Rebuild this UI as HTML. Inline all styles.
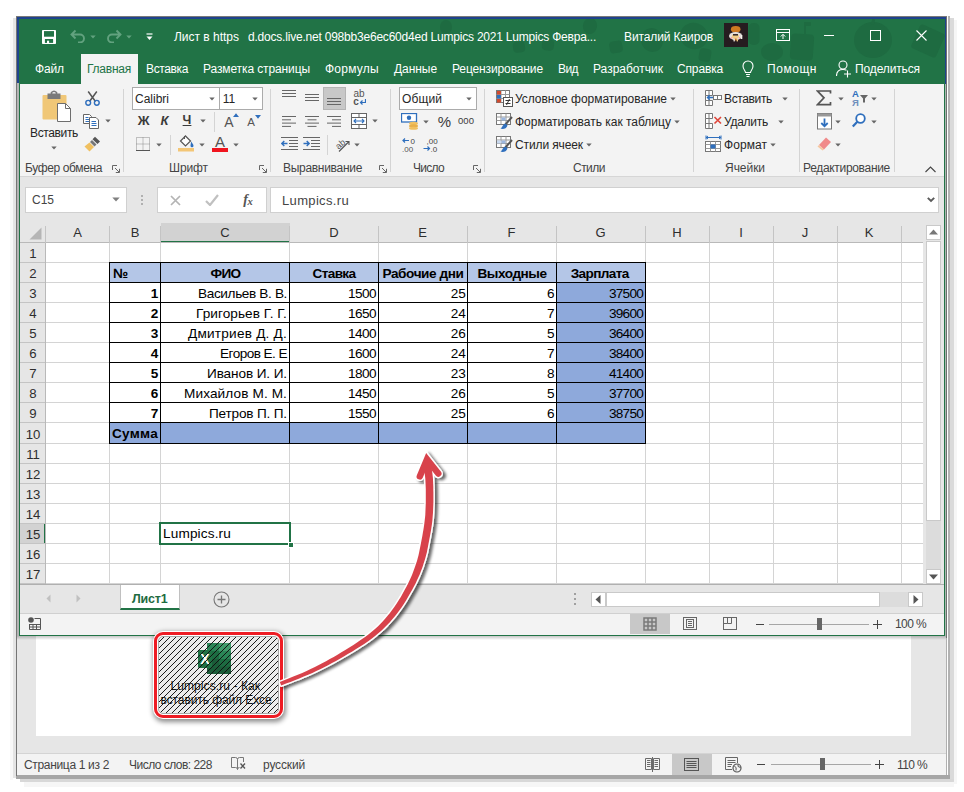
<!DOCTYPE html>
<html lang="ru">
<head>
<meta charset="utf-8">
<title>Лист в Excel</title>
<style>
html,body{margin:0;padding:0;background:#fff;}
body{width:964px;height:792px;overflow:hidden;font-family:"Liberation Sans",sans-serif;}
#root{position:relative;width:964px;height:792px;overflow:hidden;background:#fff;}
#root div,#root span.t,#root svg{position:absolute;box-sizing:border-box;}
span.t{white-space:nowrap;font-family:"Liberation Sans",sans-serif;display:inline-block;}
span.c{font-family:"Liberation Sans",sans-serif;}
</style>
</head>
<body>
<div id="root">
<div style="left:10px;top:20px;width:3px;height:760px;background:#f8f8f8;"></div>
<div style="left:13px;top:18px;width:3px;height:760px;background:#e4e4e4;"></div>
<div style="left:946px;top:638px;width:1px;height:138px;background:#b0b0b0;"></div>
<div style="left:948px;top:16px;width:2px;height:763px;background:#b2b2b2;"></div>
<div style="left:950px;top:18px;width:4px;height:764px;background:#dadada;"></div>
<div style="left:954px;top:20px;width:3px;height:764px;background:#f6f6f6;"></div>
<div style="left:16px;top:775px;width:934px;height:4px;background:#a6a6a6;"></div>
<div style="left:20px;top:779px;width:934px;height:3px;background:#d8d8d8;border-radius:0 0 4px 0;"></div>
<div style="left:24px;top:782px;width:930px;height:5px;background:#f6f6f6;"></div>
<div style="left:17px;top:636px;width:929px;height:117px;background:#e6e6e6;"></div>
<div style="left:36px;top:636px;width:875px;height:100px;background:#ffffff;"></div>
<div style="left:17px;top:753px;width:929px;height:22px;background:#f3f3f3;border-top:1px solid #d4d4d4;"></div>
<div style="left:16px;top:16px;width:1px;height:760px;background:#757575;"></div>
<div style="left:17px;top:17px;width:929px;height:619px;background:#217346;"></div>
<div style="left:17px;top:17px;width:929px;height:2px;background:#1f438c;"></div>
<div style="left:17px;top:17px;width:2px;height:66px;background:#1f438c;"></div>
<div style="left:945px;top:17px;width:1px;height:67px;background:#1f438c;"></div>
<div style="left:16px;top:16px;width:931px;height:1px;background:#7a7a7a;"></div>
<svg style="left:430px;top:19px" width="515" height="65" viewBox="0 0 515 65"><g fill="#1e6b41"><ellipse cx="16" cy="8" rx="6" ry="7" transform="rotate(0 16 8)"/><rect x="83.0" y="22.5" width="12" height="11" rx="4" transform="rotate(-8 89 28)"/><rect x="112.0" y="20.5" width="12" height="11" rx="4" transform="rotate(6 118 26)"/><ellipse cx="160" cy="7" rx="7" ry="8" transform="rotate(10 160 7)"/><rect x="179.5" y="22.0" width="13" height="12" rx="4" transform="rotate(-10 186 28)"/><ellipse cx="222" cy="21" rx="11" ry="12" transform="rotate(-15 222 21)"/><ellipse cx="264" cy="17" rx="14" ry="13" transform="rotate(20 264 17)"/><rect x="269.0" y="29.5" width="12" height="13" rx="4" transform="rotate(10 275 36)"/><rect x="318.5" y="4.0" width="11" height="22" rx="5" transform="rotate(0 324 15)"/><ellipse cx="342" cy="33" rx="11" ry="9" transform="rotate(0 342 33)"/><rect x="360.5" y="15.0" width="23" height="26" rx="4" transform="rotate(4 372 28)"/><rect x="374.0" y="3.0" width="2" height="12" rx="0" transform="rotate(0 375 9)"/><rect x="375.0" y="3.0" width="6" height="4" rx="1" transform="rotate(0 378 5)"/><ellipse cx="443" cy="21" rx="19" ry="18" transform="rotate(0 443 21)"/><rect x="441.5" y="0.0" width="3" height="6" rx="1" transform="rotate(15 443 3)"/><rect x="484.5" y="9.0" width="27" height="26" rx="3" transform="rotate(24 498 22)"/></g></svg>
<div style="left:81px;top:54px;width:57px;height:30px;background:#f3f3f3;"></div>
<div style="left:20px;top:84px;width:924px;height:93px;background:#f3f3f3;"></div>
<div style="left:20px;top:176px;width:924px;height:1px;background:#d6d6d6;"></div>
<div style="left:20px;top:177px;width:924px;height:408px;background:#e6e6e6;"></div>
<div style="left:25px;top:187px;width:102px;height:26px;background:#ffffff;border:1px solid #d0d0d0;"></div>
<div style="left:157px;top:187px;width:110px;height:26px;background:#ffffff;border:1px solid #d0d0d0;"></div>
<div style="left:270px;top:187px;width:669px;height:26px;background:#ffffff;border:1px solid #d0d0d0;"></div>
<div style="left:46px;top:243px;width:877px;height:342px;background:#ffffff;"></div>
<div style="left:20px;top:243px;width:26px;height:342px;background:#e6e6e6;"></div>
<div style="left:161px;top:223px;width:129px;height:20px;background:#d2d2d2;border-bottom:2px solid #217346;"></div>
<div style="left:20px;top:524px;width:26px;height:19px;background:#d2d2d2;border-right:2px solid #217346;"></div>
<div style="left:109px;top:243px;width:1px;height:342px;background:#d4d4d4;"></div>
<div style="left:160px;top:243px;width:1px;height:342px;background:#d4d4d4;"></div>
<div style="left:289px;top:243px;width:1px;height:342px;background:#d4d4d4;"></div>
<div style="left:378px;top:243px;width:1px;height:342px;background:#d4d4d4;"></div>
<div style="left:467px;top:243px;width:1px;height:342px;background:#d4d4d4;"></div>
<div style="left:556px;top:243px;width:1px;height:342px;background:#d4d4d4;"></div>
<div style="left:645px;top:243px;width:1px;height:342px;background:#d4d4d4;"></div>
<div style="left:709px;top:243px;width:1px;height:342px;background:#d4d4d4;"></div>
<div style="left:773px;top:243px;width:1px;height:342px;background:#d4d4d4;"></div>
<div style="left:837px;top:243px;width:1px;height:342px;background:#d4d4d4;"></div>
<div style="left:901px;top:243px;width:1px;height:342px;background:#d4d4d4;"></div>
<div style="left:46px;top:262px;width:877px;height:1px;background:#d4d4d4;"></div>
<div style="left:46px;top:282px;width:877px;height:1px;background:#d4d4d4;"></div>
<div style="left:46px;top:302px;width:877px;height:1px;background:#d4d4d4;"></div>
<div style="left:46px;top:322px;width:877px;height:1px;background:#d4d4d4;"></div>
<div style="left:46px;top:342px;width:877px;height:1px;background:#d4d4d4;"></div>
<div style="left:46px;top:362px;width:877px;height:1px;background:#d4d4d4;"></div>
<div style="left:46px;top:382px;width:877px;height:1px;background:#d4d4d4;"></div>
<div style="left:46px;top:402px;width:877px;height:1px;background:#d4d4d4;"></div>
<div style="left:46px;top:422px;width:877px;height:1px;background:#d4d4d4;"></div>
<div style="left:46px;top:443px;width:877px;height:1px;background:#d4d4d4;"></div>
<div style="left:46px;top:463px;width:877px;height:1px;background:#d4d4d4;"></div>
<div style="left:46px;top:483px;width:877px;height:1px;background:#d4d4d4;"></div>
<div style="left:46px;top:503px;width:877px;height:1px;background:#d4d4d4;"></div>
<div style="left:46px;top:523px;width:877px;height:1px;background:#d4d4d4;"></div>
<div style="left:46px;top:543px;width:877px;height:1px;background:#d4d4d4;"></div>
<div style="left:46px;top:563px;width:877px;height:1px;background:#d4d4d4;"></div>
<div style="left:46px;top:583px;width:877px;height:1px;background:#d4d4d4;"></div>
<div style="left:20px;top:242px;width:903px;height:1px;background:#b9b9b9;"></div>
<div style="left:45px;top:243px;width:1px;height:342px;background:#b9b9b9;"></div>
<div style="left:45px;top:226px;width:1px;height:17px;background:#c4c4c4;"></div>
<div style="left:109px;top:226px;width:1px;height:17px;background:#c4c4c4;"></div>
<div style="left:160px;top:226px;width:1px;height:17px;background:#c4c4c4;"></div>
<div style="left:289px;top:226px;width:1px;height:17px;background:#c4c4c4;"></div>
<div style="left:378px;top:226px;width:1px;height:17px;background:#c4c4c4;"></div>
<div style="left:467px;top:226px;width:1px;height:17px;background:#c4c4c4;"></div>
<div style="left:556px;top:226px;width:1px;height:17px;background:#c4c4c4;"></div>
<div style="left:645px;top:226px;width:1px;height:17px;background:#c4c4c4;"></div>
<div style="left:709px;top:226px;width:1px;height:17px;background:#c4c4c4;"></div>
<div style="left:773px;top:226px;width:1px;height:17px;background:#c4c4c4;"></div>
<div style="left:837px;top:226px;width:1px;height:17px;background:#c4c4c4;"></div>
<div style="left:901px;top:226px;width:1px;height:17px;background:#c4c4c4;"></div>
<div style="left:20px;top:262px;width:25px;height:1px;background:#c4c4c4;"></div>
<div style="left:20px;top:282px;width:25px;height:1px;background:#c4c4c4;"></div>
<div style="left:20px;top:302px;width:25px;height:1px;background:#c4c4c4;"></div>
<div style="left:20px;top:322px;width:25px;height:1px;background:#c4c4c4;"></div>
<div style="left:20px;top:342px;width:25px;height:1px;background:#c4c4c4;"></div>
<div style="left:20px;top:362px;width:25px;height:1px;background:#c4c4c4;"></div>
<div style="left:20px;top:382px;width:25px;height:1px;background:#c4c4c4;"></div>
<div style="left:20px;top:402px;width:25px;height:1px;background:#c4c4c4;"></div>
<div style="left:20px;top:422px;width:25px;height:1px;background:#c4c4c4;"></div>
<div style="left:20px;top:443px;width:25px;height:1px;background:#c4c4c4;"></div>
<div style="left:20px;top:463px;width:25px;height:1px;background:#c4c4c4;"></div>
<div style="left:20px;top:483px;width:25px;height:1px;background:#c4c4c4;"></div>
<div style="left:20px;top:503px;width:25px;height:1px;background:#c4c4c4;"></div>
<div style="left:20px;top:523px;width:25px;height:1px;background:#c4c4c4;"></div>
<div style="left:20px;top:543px;width:25px;height:1px;background:#c4c4c4;"></div>
<div style="left:20px;top:563px;width:25px;height:1px;background:#c4c4c4;"></div>
<div style="left:20px;top:583px;width:25px;height:1px;background:#c4c4c4;"></div>
<svg style="left:29px;top:227px" width="13" height="13"><path d="M12.5 0.5V12.5H0.5Z" fill="#b5b5b5"/></svg>
<div style="left:110px;top:263px;width:536px;height:19px;background:#b4c6e7;"></div>
<div style="left:557px;top:283px;width:89px;height:139px;background:#8ea9db;"></div>
<div style="left:110px;top:423px;width:536px;height:20px;background:#8ea9db;"></div>
<div style="left:109px;top:262px;width:1px;height:182px;background:#000000;"></div>
<div style="left:160px;top:262px;width:1px;height:182px;background:#000000;"></div>
<div style="left:289px;top:262px;width:1px;height:182px;background:#000000;"></div>
<div style="left:378px;top:262px;width:1px;height:182px;background:#000000;"></div>
<div style="left:467px;top:262px;width:1px;height:182px;background:#000000;"></div>
<div style="left:556px;top:262px;width:1px;height:182px;background:#000000;"></div>
<div style="left:645px;top:262px;width:1px;height:182px;background:#000000;"></div>
<div style="left:109px;top:262px;width:537px;height:1px;background:#000000;"></div>
<div style="left:109px;top:282px;width:537px;height:1px;background:#000000;"></div>
<div style="left:109px;top:302px;width:537px;height:1px;background:#000000;"></div>
<div style="left:109px;top:322px;width:537px;height:1px;background:#000000;"></div>
<div style="left:109px;top:342px;width:537px;height:1px;background:#000000;"></div>
<div style="left:109px;top:362px;width:537px;height:1px;background:#000000;"></div>
<div style="left:109px;top:382px;width:537px;height:1px;background:#000000;"></div>
<div style="left:109px;top:402px;width:537px;height:1px;background:#000000;"></div>
<div style="left:109px;top:422px;width:537px;height:1px;background:#000000;"></div>
<div style="left:109px;top:443px;width:537px;height:1px;background:#000000;"></div>
<div style="left:159px;top:522px;width:132px;height:23px;border:2px solid #217346;"></div>
<div style="left:288px;top:542px;width:6px;height:6px;background:#217346;border:1px solid #fff;"></div>
<div style="left:926px;top:225px;width:15px;height:15px;background:#ffffff;border:1px solid #c9c9c9;"></div>
<div style="left:926px;top:521px;width:15px;height:48px;background:#dcdcdc;"></div>
<div style="left:926px;top:241px;width:15px;height:280px;background:#ffffff;border:1px solid #c9c9c9;"></div>
<div style="left:926px;top:569px;width:15px;height:15px;background:#ffffff;border:1px solid #c9c9c9;"></div>
<svg style="left:929px;top:229px" width="9" height="6"><path d="M0 5.5L4.5 0.5L9 5.5Z" fill="#777"/></svg>
<svg style="left:929px;top:574px" width="9" height="6"><path d="M0 0.5L4.5 5.5L9 0.5Z" fill="#555"/></svg>
<div style="left:20px;top:585px;width:924px;height:28px;background:#e6e6e6;"></div>
<div style="left:20px;top:584px;width:924px;height:1px;background:#b0b0b0;"></div>
<div style="left:120px;top:585px;width:60px;height:25px;background:#ffffff;border-bottom:2px solid #217346;border-left:1px solid #c0c0c0;border-right:1px solid #c0c0c0;"></div>
<div style="left:591px;top:592px;width:15px;height:15px;background:#ffffff;border:1px solid #c9c9c9;"></div>
<div style="left:880px;top:592px;width:28px;height:15px;background:#dcdcdc;"></div>
<div style="left:606px;top:592px;width:274px;height:15px;background:#ffffff;border:1px solid #c9c9c9;"></div>
<div style="left:908px;top:592px;width:15px;height:15px;background:#ffffff;border:1px solid #c9c9c9;"></div>
<svg style="left:595px;top:595px" width="6" height="9"><path d="M5.5 0L0.5 4.5L5.5 9Z" fill="#555"/></svg>
<svg style="left:913px;top:595px" width="6" height="9"><path d="M0.5 0L5.5 4.5L0.5 9Z" fill="#555"/></svg>
<div style="left:574px;top:593px;width:2px;height:2px;background:#a0a0a0;"></div>
<div style="left:574px;top:598px;width:2px;height:2px;background:#a0a0a0;"></div>
<div style="left:574px;top:603px;width:2px;height:2px;background:#a0a0a0;"></div>
<div style="left:20px;top:613px;width:924px;height:22px;background:#f3f3f3;border-top:1px solid #d0d0d0;"></div>
<div style="left:630px;top:614px;width:40px;height:21px;background:#c8c8c8;"></div>
<div style="left:20px;top:634px;width:924px;height:1px;background:#f3f3f3;"></div>
<div style="left:19px;top:635px;width:926px;height:1px;background:#217346;"></div>
<div style="left:17px;top:83px;width:2px;height:553px;background:#b4b4b4;"></div>
<div style="left:19px;top:84px;width:1px;height:552px;background:#217346;"></div>
<div style="left:944px;top:84px;width:1px;height:552px;background:#217346;"></div>
<div style="left:945px;top:84px;width:1px;height:552px;background:#a9b8af;"></div>
<div style="left:946px;top:17px;width:1px;height:621px;background:#707070;"></div>
<div style="left:17px;top:636px;width:929px;height:4px;background:linear-gradient(rgba(0,0,0,.22),rgba(0,0,0,0));"></div>
<div style="left:132px;top:87px;width:88px;height:23px;background:#ffffff;border:1px solid #ababab;"></div>
<div style="left:220px;top:87px;width:43px;height:23px;background:#ffffff;border:1px solid #ababab;border-left:none;"></div>
<div style="left:399px;top:87px;width:78px;height:23px;background:#ffffff;border:1px solid #ababab;"></div>
<div style="left:323px;top:87px;width:23px;height:23px;background:#c8c8c8;border:1px solid #b4b4b4;"></div>
<div style="left:672px;top:754px;width:40px;height:21px;background:#c8c8c8;"></div>
<span class="t m" style="left:174px;top:29.8px;font-size:12px;line-height:14.4px;color:#ffffff;letter-spacing:-0.01px;">Лист в https</span>
<span class="t m" style="left:248px;top:29.8px;font-size:12px;line-height:14.4px;color:#ffffff;letter-spacing:-0.21px;">d.docs.live.net 098bb3e6ec60d4ed Lumpics 2021 Lumpics Февра...</span>
<span class="t m" style="left:624px;top:29.8px;font-size:12px;line-height:14.4px;color:#ffffff;letter-spacing:-0.11px;">Виталий Каиров</span>
<span class="t m" style="left:35px;top:61.8px;font-size:12px;line-height:14.4px;color:#ffffff;letter-spacing:-0.13px;">Файл</span>
<span class="t m" style="left:87px;top:61.8px;font-size:12px;line-height:14.4px;color:#217346;letter-spacing:-0.24px;">Главная</span>
<span class="t m" style="left:146px;top:61.8px;font-size:12px;line-height:14.4px;color:#ffffff;letter-spacing:-0.37px;">Вставка</span>
<span class="t m" style="left:203px;top:61.8px;font-size:12px;line-height:14.4px;color:#ffffff;letter-spacing:-0.11px;">Разметка страницы</span>
<span class="t m" style="left:325px;top:61.8px;font-size:12px;line-height:14.4px;color:#ffffff;letter-spacing:0.25px;">Формулы</span>
<span class="t m" style="left:394px;top:61.8px;font-size:12px;line-height:14.4px;color:#ffffff;letter-spacing:-0.06px;">Данные</span>
<span class="t m" style="left:452px;top:61.8px;font-size:12px;line-height:14.4px;color:#ffffff;letter-spacing:-0.12px;">Рецензирование</span>
<span class="t m" style="left:558px;top:61.8px;font-size:12px;line-height:14.4px;color:#ffffff;letter-spacing:-0.57px;">Вид</span>
<span class="t m" style="left:593px;top:61.8px;font-size:12px;line-height:14.4px;color:#ffffff;">Разработчик</span>
<span class="t m" style="left:677px;top:61.8px;font-size:12px;line-height:14.4px;color:#ffffff;letter-spacing:-0.15px;">Справка</span>
<span class="t m" style="left:767px;top:61.8px;font-size:12px;line-height:14.4px;color:#ffffff;letter-spacing:0.54px;">Помощн</span>
<span class="t m" style="left:855px;top:61.8px;font-size:12px;line-height:14.4px;color:#ffffff;letter-spacing:-0.13px;">Поделиться</span>
<span class="t m" style="left:30px;top:125.8px;font-size:12px;line-height:14.4px;color:#262626;letter-spacing:-0.36px;">Вставить</span>
<span class="t m" style="left:25px;top:161.3px;font-size:12px;line-height:14.4px;color:#444444;letter-spacing:-0.38px;">Буфер обмена</span>
<span class="t m" style="left:135px;top:91.8px;font-size:12px;line-height:14.4px;color:#262626;">Calibri</span>
<span class="t m" style="left:229.0px;transform:translateX(-50%);top:91.8px;font-size:12px;line-height:14.4px;color:#262626;">11</span>
<span class="t m" style="left:143.5px;transform:translateX(-50%);top:113.2px;font-size:13px;line-height:15.6px;color:#3b3b3b;font-weight:700;">Ж</span>
<span class="t m" style="left:164.5px;transform:translateX(-50%);top:113.2px;font-size:13px;line-height:15.6px;color:#3b3b3b;font-weight:700;font-style:italic;">К</span>
<span class="t m" style="left:187.0px;transform:translateX(-50%);top:113.0px;font-size:12.5px;line-height:15.0px;color:#3b3b3b;font-weight:700;text-decoration:underline;">Ч</span>
<span class="t m" style="left:169px;top:161.3px;font-size:12px;line-height:14.4px;color:#444444;letter-spacing:-0.10px;">Шрифт</span>
<span class="t m" style="left:283px;top:161.3px;font-size:12px;line-height:14.4px;color:#444444;letter-spacing:-0.30px;">Выравнивание</span>
<span class="t m" style="left:402px;top:91.8px;font-size:12px;line-height:14.4px;color:#262626;letter-spacing:0.10px;">Общий</span>
<span class="t m" style="left:444.5px;transform:translateX(-50%);top:112.5px;font-size:15px;line-height:18.0px;color:#3b3b3b;">%</span>
<span class="t m" style="left:458px;top:115.3px;font-size:9.5px;line-height:11.4px;color:#3b3b3b;letter-spacing:0.05px;">000</span>
<span class="t m" style="left:413px;top:161.3px;font-size:12px;line-height:14.4px;color:#444444;letter-spacing:-0.70px;">Число</span>
<span class="t m" style="left:515px;top:91.8px;font-size:12px;line-height:14.4px;color:#262626;letter-spacing:-0.03px;">Условное форматирование</span>
<span class="t m" style="left:515px;top:114.8px;font-size:12px;line-height:14.4px;color:#262626;letter-spacing:-0.01px;">Форматировать как таблицу</span>
<span class="t m" style="left:515px;top:137.8px;font-size:12px;line-height:14.4px;color:#262626;letter-spacing:-0.12px;">Стили ячеек</span>
<span class="t m" style="left:573px;top:161.3px;font-size:12px;line-height:14.4px;color:#444444;letter-spacing:-0.52px;">Стили</span>
<span class="t m" style="left:724px;top:91.8px;font-size:12px;line-height:14.4px;color:#262626;letter-spacing:-0.36px;">Вставить</span>
<span class="t m" style="left:724px;top:114.8px;font-size:12px;line-height:14.4px;color:#262626;letter-spacing:-0.26px;">Удалить</span>
<span class="t m" style="left:724px;top:137.8px;font-size:12px;line-height:14.4px;color:#262626;letter-spacing:0.06px;">Формат</span>
<span class="t m" style="left:725px;top:161.3px;font-size:12px;line-height:14.4px;color:#444444;letter-spacing:-0.04px;">Ячейки</span>
<span class="t m" style="left:803px;top:161.3px;font-size:12px;line-height:14.4px;color:#444444;letter-spacing:-0.32px;">Редактирование</span>
<span class="t m" style="left:32px;top:193.3px;font-size:12px;line-height:14.4px;color:#444444;letter-spacing:-0.01px;">C15</span>
<span class="t m" style="left:282px;top:192.7px;font-size:13px;line-height:15.6px;color:#444444;letter-spacing:0.34px;">Lumpics.ru</span>
<span class="t m" style="left:77.5px;transform:translateX(-50%);top:225.2px;font-size:13px;line-height:15.6px;color:#2e2e2e;">A</span>
<span class="t m" style="left:135.0px;transform:translateX(-50%);top:225.2px;font-size:13px;line-height:15.6px;color:#2e2e2e;">B</span>
<span class="t m" style="left:225.0px;transform:translateX(-50%);top:225.2px;font-size:13px;line-height:15.6px;color:#2e2e2e;">C</span>
<span class="t m" style="left:334.0px;transform:translateX(-50%);top:225.2px;font-size:13px;line-height:15.6px;color:#2e2e2e;">D</span>
<span class="t m" style="left:422.5px;transform:translateX(-50%);top:225.2px;font-size:13px;line-height:15.6px;color:#2e2e2e;">E</span>
<span class="t m" style="left:511.5px;transform:translateX(-50%);top:225.2px;font-size:13px;line-height:15.6px;color:#2e2e2e;">F</span>
<span class="t m" style="left:600.5px;transform:translateX(-50%);top:225.2px;font-size:13px;line-height:15.6px;color:#2e2e2e;">G</span>
<span class="t m" style="left:677.0px;transform:translateX(-50%);top:225.2px;font-size:13px;line-height:15.6px;color:#2e2e2e;">H</span>
<span class="t m" style="left:741.0px;transform:translateX(-50%);top:225.2px;font-size:13px;line-height:15.6px;color:#2e2e2e;">I</span>
<span class="t m" style="left:805.0px;transform:translateX(-50%);top:225.2px;font-size:13px;line-height:15.6px;color:#2e2e2e;">J</span>
<span class="t m" style="left:869.0px;transform:translateX(-50%);top:225.2px;font-size:13px;line-height:15.6px;color:#2e2e2e;">K</span>
<span class="t m" style="left:33.0px;transform:translateX(-50%);top:246.4px;font-size:13.2px;line-height:15.8px;color:#2e2e2e;">1</span>
<span class="t m" style="left:33.0px;transform:translateX(-50%);top:266.4px;font-size:13.2px;line-height:15.8px;color:#2e2e2e;">2</span>
<span class="t m" style="left:33.0px;transform:translateX(-50%);top:286.4px;font-size:13.2px;line-height:15.8px;color:#2e2e2e;">3</span>
<span class="t m" style="left:33.0px;transform:translateX(-50%);top:306.4px;font-size:13.2px;line-height:15.8px;color:#2e2e2e;">4</span>
<span class="t m" style="left:33.0px;transform:translateX(-50%);top:326.4px;font-size:13.2px;line-height:15.8px;color:#2e2e2e;">5</span>
<span class="t m" style="left:33.0px;transform:translateX(-50%);top:346.4px;font-size:13.2px;line-height:15.8px;color:#2e2e2e;">6</span>
<span class="t m" style="left:33.0px;transform:translateX(-50%);top:366.4px;font-size:13.2px;line-height:15.8px;color:#2e2e2e;">7</span>
<span class="t m" style="left:33.0px;transform:translateX(-50%);top:386.4px;font-size:13.2px;line-height:15.8px;color:#2e2e2e;">8</span>
<span class="t m" style="left:33.0px;transform:translateX(-50%);top:406.4px;font-size:13.2px;line-height:15.8px;color:#2e2e2e;">9</span>
<span class="t m" style="left:33.0px;transform:translateX(-50%);top:426.9px;font-size:13.2px;line-height:15.8px;color:#2e2e2e;">10</span>
<span class="t m" style="left:33.0px;transform:translateX(-50%);top:447.4px;font-size:13.2px;line-height:15.8px;color:#2e2e2e;">11</span>
<span class="t m" style="left:33.0px;transform:translateX(-50%);top:467.4px;font-size:13.2px;line-height:15.8px;color:#2e2e2e;">12</span>
<span class="t m" style="left:33.0px;transform:translateX(-50%);top:487.4px;font-size:13.2px;line-height:15.8px;color:#2e2e2e;">13</span>
<span class="t m" style="left:33.0px;transform:translateX(-50%);top:507.4px;font-size:13.2px;line-height:15.8px;color:#2e2e2e;">14</span>
<span class="t m" style="left:33.0px;transform:translateX(-50%);top:527.4px;font-size:13.2px;line-height:15.8px;color:#2e2e2e;">15</span>
<span class="t m" style="left:33.0px;transform:translateX(-50%);top:547.4px;font-size:13.2px;line-height:15.8px;color:#2e2e2e;">16</span>
<span class="t m" style="left:33.0px;transform:translateX(-50%);top:567.4px;font-size:13.2px;line-height:15.8px;color:#2e2e2e;">17</span>
<span class="t m" style="left:113px;top:265.8px;font-size:13.6px;line-height:16.3px;color:#000000;font-weight:700;">№</span>
<span class="t m" style="left:210.5px;top:265.8px;font-size:13.6px;line-height:16.3px;color:#000000;font-weight:700;letter-spacing:-0.65px;">ФИО</span>
<span class="t m" style="left:312.5px;top:265.8px;font-size:13.6px;line-height:16.3px;color:#000000;font-weight:700;letter-spacing:-0.63px;">Ставка</span>
<span class="t m" style="left:382.5px;top:265.8px;font-size:13.6px;line-height:16.3px;color:#000000;font-weight:700;letter-spacing:-0.42px;">Рабочие дни</span>
<span class="t m" style="left:477.5px;top:265.8px;font-size:13.6px;line-height:16.3px;color:#000000;font-weight:700;letter-spacing:-0.47px;">Выходные</span>
<span class="t m" style="left:570.7px;top:265.8px;font-size:13.6px;line-height:16.3px;color:#000000;font-weight:700;letter-spacing:-0.63px;">Зарплата</span>
<span class="t m" style="left:154.5px;transform:translateX(-50%);top:285.8px;font-size:13.6px;line-height:16.3px;color:#000000;font-weight:700;">1</span>
<span class="t m" style="left:198px;top:285.8px;font-size:13.6px;line-height:16.3px;color:#000000;letter-spacing:-0.36px;">Васильев В. В.</span>
<span class="t m" style="left:348px;top:285.8px;font-size:13.6px;line-height:16.3px;color:#000000;letter-spacing:-0.56px;">1500</span>
<span class="t m" style="left:458.2px;transform:translateX(-50%);top:285.8px;font-size:13.6px;line-height:16.3px;color:#000000;">25</span>
<span class="t m" style="left:550.8px;transform:translateX(-50%);top:285.8px;font-size:13.6px;line-height:16.3px;color:#000000;">6</span>
<span class="t m" style="left:609px;top:285.8px;font-size:13.6px;line-height:16.3px;color:#000000;letter-spacing:-0.76px;">37500</span>
<span class="t m" style="left:154.5px;transform:translateX(-50%);top:305.8px;font-size:13.6px;line-height:16.3px;color:#000000;font-weight:700;">2</span>
<span class="t m" style="left:196px;top:305.8px;font-size:13.6px;line-height:16.3px;color:#000000;letter-spacing:0.07px;">Григорьев Г. Г.</span>
<span class="t m" style="left:348px;top:305.8px;font-size:13.6px;line-height:16.3px;color:#000000;letter-spacing:-0.56px;">1650</span>
<span class="t m" style="left:458.2px;transform:translateX(-50%);top:305.8px;font-size:13.6px;line-height:16.3px;color:#000000;">24</span>
<span class="t m" style="left:550.8px;transform:translateX(-50%);top:305.8px;font-size:13.6px;line-height:16.3px;color:#000000;">7</span>
<span class="t m" style="left:609px;top:305.8px;font-size:13.6px;line-height:16.3px;color:#000000;letter-spacing:-0.76px;">39600</span>
<span class="t m" style="left:154.5px;transform:translateX(-50%);top:325.8px;font-size:13.6px;line-height:16.3px;color:#000000;font-weight:700;">3</span>
<span class="t m" style="left:188px;top:325.8px;font-size:13.6px;line-height:16.3px;color:#000000;letter-spacing:0.23px;">Дмитриев Д. Д.</span>
<span class="t m" style="left:348px;top:325.8px;font-size:13.6px;line-height:16.3px;color:#000000;letter-spacing:-0.56px;">1400</span>
<span class="t m" style="left:458.2px;transform:translateX(-50%);top:325.8px;font-size:13.6px;line-height:16.3px;color:#000000;">26</span>
<span class="t m" style="left:550.8px;transform:translateX(-50%);top:325.8px;font-size:13.6px;line-height:16.3px;color:#000000;">5</span>
<span class="t m" style="left:609px;top:325.8px;font-size:13.6px;line-height:16.3px;color:#000000;letter-spacing:-0.76px;">36400</span>
<span class="t m" style="left:154.5px;transform:translateX(-50%);top:345.8px;font-size:13.6px;line-height:16.3px;color:#000000;font-weight:700;">4</span>
<span class="t m" style="left:220px;top:345.8px;font-size:13.6px;line-height:16.3px;color:#000000;letter-spacing:-0.55px;">Егоров Е. Е</span>
<span class="t m" style="left:348px;top:345.8px;font-size:13.6px;line-height:16.3px;color:#000000;letter-spacing:-0.56px;">1600</span>
<span class="t m" style="left:458.2px;transform:translateX(-50%);top:345.8px;font-size:13.6px;line-height:16.3px;color:#000000;">24</span>
<span class="t m" style="left:550.8px;transform:translateX(-50%);top:345.8px;font-size:13.6px;line-height:16.3px;color:#000000;">7</span>
<span class="t m" style="left:609px;top:345.8px;font-size:13.6px;line-height:16.3px;color:#000000;letter-spacing:-0.76px;">38400</span>
<span class="t m" style="left:154.5px;transform:translateX(-50%);top:365.8px;font-size:13.6px;line-height:16.3px;color:#000000;font-weight:700;">5</span>
<span class="t m" style="left:207px;top:365.8px;font-size:13.6px;line-height:16.3px;color:#000000;letter-spacing:-0.11px;">Иванов И. И.</span>
<span class="t m" style="left:348px;top:365.8px;font-size:13.6px;line-height:16.3px;color:#000000;letter-spacing:-0.56px;">1800</span>
<span class="t m" style="left:458.2px;transform:translateX(-50%);top:365.8px;font-size:13.6px;line-height:16.3px;color:#000000;">23</span>
<span class="t m" style="left:550.8px;transform:translateX(-50%);top:365.8px;font-size:13.6px;line-height:16.3px;color:#000000;">8</span>
<span class="t m" style="left:609px;top:365.8px;font-size:13.6px;line-height:16.3px;color:#000000;letter-spacing:-0.76px;">41400</span>
<span class="t m" style="left:154.5px;transform:translateX(-50%);top:385.8px;font-size:13.6px;line-height:16.3px;color:#000000;font-weight:700;">6</span>
<span class="t m" style="left:184px;top:385.8px;font-size:13.6px;line-height:16.3px;color:#000000;letter-spacing:0.12px;">Михайлов М. М.</span>
<span class="t m" style="left:348px;top:385.8px;font-size:13.6px;line-height:16.3px;color:#000000;letter-spacing:-0.56px;">1450</span>
<span class="t m" style="left:458.2px;transform:translateX(-50%);top:385.8px;font-size:13.6px;line-height:16.3px;color:#000000;">26</span>
<span class="t m" style="left:550.8px;transform:translateX(-50%);top:385.8px;font-size:13.6px;line-height:16.3px;color:#000000;">5</span>
<span class="t m" style="left:609px;top:385.8px;font-size:13.6px;line-height:16.3px;color:#000000;letter-spacing:-0.76px;">37700</span>
<span class="t m" style="left:154.5px;transform:translateX(-50%);top:405.8px;font-size:13.6px;line-height:16.3px;color:#000000;font-weight:700;">7</span>
<span class="t m" style="left:209px;top:405.8px;font-size:13.6px;line-height:16.3px;color:#000000;letter-spacing:-0.18px;">Петров П. П.</span>
<span class="t m" style="left:348px;top:405.8px;font-size:13.6px;line-height:16.3px;color:#000000;letter-spacing:-0.56px;">1550</span>
<span class="t m" style="left:458.2px;transform:translateX(-50%);top:405.8px;font-size:13.6px;line-height:16.3px;color:#000000;">25</span>
<span class="t m" style="left:550.8px;transform:translateX(-50%);top:405.8px;font-size:13.6px;line-height:16.3px;color:#000000;">6</span>
<span class="t m" style="left:609px;top:405.8px;font-size:13.6px;line-height:16.3px;color:#000000;letter-spacing:-0.76px;">38750</span>
<span class="t m" style="left:112px;top:425.8px;font-size:13.6px;line-height:16.3px;color:#000000;font-weight:700;letter-spacing:0.26px;">Сумма</span>
<span class="t m" style="left:163px;top:525.8px;font-size:13.6px;line-height:16.3px;color:#000000;letter-spacing:0.15px;">Lumpics.ru</span>
<span class="t m" style="left:132px;top:591.5px;font-size:12.5px;line-height:15.0px;color:#1e6b41;font-weight:700;letter-spacing:-0.20px;">Лист1</span>
<span class="t m" style="left:895px;top:616.8px;font-size:12px;line-height:14.4px;color:#444444;letter-spacing:-0.61px;">100 %</span>
<span class="t m" style="left:24px;top:758.0px;font-size:12px;line-height:14.4px;color:#444444;letter-spacing:-0.33px;">Страница 1 из 2</span>
<span class="t m" style="left:129px;top:758.0px;font-size:12px;line-height:14.4px;color:#444444;letter-spacing:-0.52px;">Число слов: 228</span>
<span class="t m" style="left:263px;top:758.0px;font-size:12px;line-height:14.4px;color:#444444;letter-spacing:-0.15px;">русский</span>
<span class="t m" style="left:897px;top:758.0px;font-size:12px;line-height:14.4px;color:#444444;letter-spacing:-0.63px;">110 %</span>
<svg style="left:42px;top:30px;" width="14" height="14" viewBox="0 0 14 14"><rect x="0" y="0" width="14" height="14" rx="0.800" fill="#fff"/><rect x="2" y="1.100" width="10" height="5.600" fill="#217346"/><rect x="2.900" y="9" width="8.200" height="3.900" fill="#217346"/><rect x="5" y="10.700" width="2.100" height="2.300" fill="#fff"/></svg>
<svg style="left:70px;top:29px;" width="16" height="14" viewBox="0 0 16 14"><path d="M1.5 5.5H10A4 4 0 0 1 10 13.5H8M5.5 1.5L1.5 5.5L5.5 9.5" fill="none" stroke="#62a27f" stroke-width="1.9"/></svg>
<svg style="left:90px;top:35px;" width="6" height="4" viewBox="0 0 6 4"><path d="M0.3 0.5H5.7L3 3.5Z" fill="#62a27f"/></svg>
<svg style="left:106px;top:29px;" width="16" height="14" viewBox="0 0 16 14"><path d="M14.5 5.5H6A4 4 0 0 0 6 13.5H8M10.5 1.5L14.5 5.5L10.5 9.5" fill="none" stroke="#62a27f" stroke-width="1.9"/></svg>
<svg style="left:126px;top:35px;" width="6" height="4" viewBox="0 0 6 4"><path d="M0.3 0.5H5.7L3 3.5Z" fill="#62a27f"/></svg>
<svg style="left:146px;top:33px;" width="7" height="8" viewBox="0 0 7 8"><path d="M0.5 1H6.5" stroke="#fff" stroke-width="1.2"/><path d="M0.5 3.5H6.5L3.5 7Z" fill="#fff"/></svg>
<div style="left:724px;top:23px;width:24px;height:24px;background:#261c20;"></div>
<svg style="left:724px;top:23px;" width="24" height="24" viewBox="0 0 24 24"><ellipse cx="11.700" cy="6.200" rx="4.800" ry="3.300" fill="#cf7a22"/><ellipse cx="11.600" cy="13" rx="6.600" ry="4" fill="#e6e1dc"/><ellipse cx="11.400" cy="13.300" rx="3.600" ry="2.600" fill="#f1cd86"/><rect x="9" y="11" width="5" height="1.600" fill="#3a2e2c"/><rect x="9.500" y="16" width="1.400" height="2.400" fill="#efe9e2"/><rect x="12.600" y="16" width="1.400" height="2.400" fill="#f1cd86"/><rect x="10.900" y="15.600" width="1.700" height="1.800" fill="#c9711f"/><circle cx="7.500" cy="15" r="0.900" fill="#f1a3a8"/><circle cx="15.500" cy="15" r="0.900" fill="#f1a3a8"/><rect x="17" y="12" width="1.300" height="4" fill="#f4f1ec"/></svg>
<svg style="left:776px;top:29px;" width="14" height="12" viewBox="0 0 14 12"><rect x="0.5" y="0.5" width="13" height="11" fill="none" stroke="#fff"/><path d="M0.5 3.5H13.5" stroke="#fff"/><path d="M7 10V5.5M4.8 7.5L7 5.3L9.2 7.5" fill="none" stroke="#fff"/></svg>
<div style="left:824px;top:35px;width:10px;height:1px;background:#ffffff;"></div>
<div style="left:870px;top:30px;width:11px;height:11px;border:1px solid #fff;"></div>
<svg style="left:916px;top:30px;" width="11" height="11" viewBox="0 0 11 11"><path d="M0.5 0.5L10.5 10.5M10.5 0.5L0.5 10.5" stroke="#fff" stroke-width="1.1"/></svg>
<svg style="left:742px;top:60px;" width="12" height="18" viewBox="0 0 12 18"><path d="M3.5 12.5C3.5 10.5 1 9.5 1 6A5 5 0 0 1 11 6C11 9.5 8.500 10.500 8.500 12.500Z" fill="none" stroke="#fff" stroke-width="1.1"/><path d="M4 14.5H8M4.500 16.500H7.500" stroke="#fff" stroke-width="1"/></svg>
<svg style="left:836px;top:60px;" width="16" height="18" viewBox="0 0 16 18"><circle cx="7" cy="5" r="4" fill="none" stroke="#fff" stroke-width="1.1"/><path d="M0.5 16C0.5 11 3.500 9.500 7 9.500C8.5 9.5 9.700 9.800 10.500 10.300" fill="none" stroke="#fff" stroke-width="1.1"/><path d="M11.5 10.5V17.500M8 14H15" stroke="#fff" stroke-width="1.1"/></svg>
<svg style="left:42px;top:90px;" width="30" height="32" viewBox="0 0 30 32"><rect x="0.500" y="5" width="24" height="24.500" rx="1" fill="#f0c777"/><rect x="5.500" y="3.500" width="13" height="5.500" fill="#7a7a7a"/><path d="M9.500 4V2.500Q12 0 14.500 2.500V4" fill="none" stroke="#7a7a7a" stroke-width="1.600"/><path d="M15.500 13.500H23.500L28.500 18.500V31.500H15.500Z" fill="#fff" stroke="#6e6e6e"/><path d="M23.500 13.500V18.500H28.500" fill="none" stroke="#6e6e6e"/></svg>
<svg style="left:51px;top:146px;" width="6" height="4" viewBox="0 0 6 4"><path d="M0.3 0.5H5.7L3 3.5Z" fill="#666"/></svg>
<svg style="left:85px;top:91px;" width="15" height="15" viewBox="0 0 15 15"><path d="M3.200 0.500L10.500 10.500M11.800 0.500L4.500 10.500" stroke="#555" stroke-width="1.5" fill="none"/><circle cx="3.200" cy="11.800" r="2.400" fill="none" stroke="#2f6fbd" stroke-width="1.400"/><circle cx="11.800" cy="11.800" r="2.400" fill="none" stroke="#2f6fbd" stroke-width="1.400"/></svg>
<svg style="left:83px;top:114px;" width="17" height="15" viewBox="0 0 17 15"><path d="M0.500 0.500H6.500L8.500 2.500V9.500H0.500Z" fill="#fff" stroke="#666"/><path d="M2.500 3.500H5.500M2.500 5.500H6M2.500 7.500H6" stroke="#2f6fbd"/><path d="M6.500 3.500H13L15.500 6V14.500H6.500Z" fill="#fff" stroke="#666"/><path d="M8.500 7.500H13M8.500 9.500H13.500M8.500 11.500H13.500" stroke="#2f6fbd"/></svg>
<svg style="left:105px;top:119px;" width="6" height="4" viewBox="0 0 6 4"><path d="M0.3 0.5H5.7L3 3.5Z" fill="#666"/></svg>
<svg style="left:84px;top:136px;" width="17" height="16" viewBox="0 0 17 16"><path d="M11 0.800L16 5.500L13.500 8L8.500 3.200Z" fill="#555"/><path d="M8 4L12.500 8.500L10.500 10.500L6 6Z" fill="#777"/><path d="M5.500 6.500L10 11L5.500 15.500L0.500 10.500Z" fill="#f0c060"/></svg>
<svg style="left:112px;top:165px;" width="8" height="8" viewBox="0 0 8 8"><path d="M0.5 5V0.5H5M3 3L7.200 7.200M7.500 3.800V7.500H3.800" fill="none" stroke="#666" stroke-width="1"/></svg>
<div style="left:123px;top:89px;width:1px;height:83px;background:#d4d4d4;"></div>
<svg style="left:209px;top:96.5px;" width="6" height="4" viewBox="0 0 6 4"><path d="M0.3 0.5H5.7L3 3.5Z" fill="#666"/></svg>
<svg style="left:252px;top:96.5px;" width="6" height="4" viewBox="0 0 6 4"><path d="M0.3 0.5H5.7L3 3.5Z" fill="#666"/></svg>
<svg style="left:200px;top:119px;" width="6" height="4" viewBox="0 0 6 4"><path d="M0.3 0.5H5.7L3 3.5Z" fill="#666"/></svg>
<div style="left:214px;top:112px;width:1px;height:20px;background:#d4d4d4;"></div>
<span class="t m" style="left:229.0px;transform:translateX(-50%);top:113.6px;font-size:14px;line-height:16.8px;color:#555;">A</span>
<svg style="left:233px;top:113px;" width="6" height="4" viewBox="0 0 6 4"><path d="M0 4L3 0.300L6 4Z" fill="#2f6fbd"/></svg>
<span class="t m" style="left:251.0px;transform:translateX(-50%);top:116.1px;font-size:11.5px;line-height:13.8px;color:#555;">A</span>
<svg style="left:255px;top:115px;" width="6" height="4" viewBox="0 0 6 4"><path d="M0 0L3 3.700L6 0Z" fill="#2f6fbd"/></svg>
<svg style="left:136px;top:137px;" width="14" height="14" viewBox="0 0 14 14"><path d="M0.500 0.500H13.500V13.500H0.500ZM7 0.500V13.500M0.500 7H13.500" fill="none" stroke="#8a8a8a" stroke-dasharray="1 1"/><path d="M0 13.500H14" stroke="#555"/></svg>
<svg style="left:156px;top:143px;" width="6" height="4" viewBox="0 0 6 4"><path d="M0.3 0.5H5.7L3 3.5Z" fill="#666"/></svg>
<div style="left:170px;top:135px;width:1px;height:20px;background:#d4d4d4;"></div>
<svg style="left:178px;top:135px;" width="17" height="17" viewBox="0 0 17 17"><path d="M7 1.500L2.500 6L7.500 11L12.500 6L7 0.500" fill="#fff" stroke="#555" stroke-width="1.200"/><path d="M6.500 1V4" stroke="#555"/><path d="M13 6.500C14.500 8.500 15.500 9.500 15.500 10.800A1.500 1.500 0 0 1 12.500 10.800C12.500 9.500 13 8.500 13 6.500Z" fill="#2f6fbd"/><rect x="0" y="13" width="16" height="3.500" fill="#f3c676"/></svg>
<svg style="left:199px;top:143px;" width="6" height="4" viewBox="0 0 6 4"><path d="M0.3 0.5H5.7L3 3.5Z" fill="#666"/></svg>
<span class="t m" style="left:220.0px;transform:translateX(-50%);top:133.0px;font-size:15px;line-height:18.0px;color:#555;">A</span>
<div style="left:212px;top:148px;width:16px;height:4px;background:#f0141e;"></div>
<svg style="left:233px;top:143px;" width="6" height="4" viewBox="0 0 6 4"><path d="M0.3 0.5H5.7L3 3.5Z" fill="#666"/></svg>
<svg style="left:259px;top:165px;" width="8" height="8" viewBox="0 0 8 8"><path d="M0.5 5V0.5H5M3 3L7.200 7.200M7.500 3.800V7.500H3.800" fill="none" stroke="#666" stroke-width="1"/></svg>
<div style="left:270px;top:89px;width:1px;height:83px;background:#d4d4d4;"></div>
<svg style="left:282px;top:90px;" width="14" height="9" viewBox="0 0 14 9"><rect x="0" y="0" width="14" height="1" fill="#666"/><rect x="0" y="3" width="14" height="1" fill="#666"/><rect x="0" y="6" width="14" height="1" fill="#666"/></svg>
<svg style="left:305px;top:94px;" width="14" height="9" viewBox="0 0 14 9"><rect x="0" y="0" width="14" height="1" fill="#666"/><rect x="0" y="3" width="14" height="1" fill="#666"/><rect x="0" y="6" width="14" height="1" fill="#666"/></svg>
<svg style="left:327px;top:98px;" width="14" height="9" viewBox="0 0 14 9"><rect x="0" y="0" width="14" height="1" fill="#666"/><rect x="0" y="3" width="14" height="1" fill="#666"/><rect x="0" y="6" width="14" height="1" fill="#666"/></svg>
<span class="t m" style="left:359.0px;transform:translateX(-50%);top:88.0px;font-size:10px;line-height:12.0px;color:#555;">ab</span>
<span class="t m" style="left:356.0px;transform:translateX(-50%);top:96.0px;font-size:10px;line-height:12.0px;color:#555;font-weight:700;">c</span>
<svg style="left:359px;top:99px;" width="7" height="6" viewBox="0 0 7 6"><path d="M6.500 0V3.500H1.500M3.500 1.500L1.500 3.500L3.500 5.500" fill="none" stroke="#2f6fbd" stroke-width="1.200"/></svg>
<svg style="left:282px;top:116px;" width="14" height="14" viewBox="0 0 14 14"><rect x="0" y="0.0" width="14" height="1" fill="#666"/><rect x="0" y="3.3" width="9" height="1" fill="#666"/><rect x="0" y="6.6" width="14" height="1" fill="#666"/><rect x="0" y="9.899999999999999" width="9" height="1" fill="#666"/></svg>
<svg style="left:305px;top:116px;" width="14" height="14" viewBox="0 0 14 14"><rect x="0.0" y="0.0" width="14" height="1" fill="#666"/><rect x="2.5" y="3.3" width="9" height="1" fill="#666"/><rect x="0.0" y="6.6" width="14" height="1" fill="#666"/><rect x="2.5" y="9.899999999999999" width="9" height="1" fill="#666"/></svg>
<svg style="left:327px;top:116px;" width="14" height="14" viewBox="0 0 14 14"><rect x="0" y="0.0" width="14" height="1" fill="#666"/><rect x="5" y="3.3" width="9" height="1" fill="#666"/><rect x="0" y="6.6" width="14" height="1" fill="#666"/><rect x="5" y="9.899999999999999" width="9" height="1" fill="#666"/></svg>
<svg style="left:351px;top:113px;" width="16" height="16" viewBox="0 0 16 16"><rect x="0.500" y="0.500" width="15" height="15" fill="#fff" stroke="#666"/><path d="M0.500 4.500H15.500M0.500 11.500H15.500M8 0.500V4.500M8 11.500V15.500" stroke="#666"/><path d="M3 8H13M5 6L3 8L5 10M11 6L13 8L11 10" fill="none" stroke="#2f6fbd" stroke-width="1.100"/></svg>
<svg style="left:372px;top:119px;" width="6" height="4" viewBox="0 0 6 4"><path d="M0.3 0.5H5.7L3 3.5Z" fill="#666"/></svg>
<svg style="left:281px;top:137px;" width="17" height="14" viewBox="0 0 17 14"><path d="M0 0.500H17M8 3.500H17M8 6.500H17M8 9.500H17M0 12.500H17" stroke="#666"/><path d="M6.500 6.500H0.800M3.300 4L0.800 6.500L3.300 9" fill="none" stroke="#2f6fbd" stroke-width="1.400"/></svg>
<svg style="left:303px;top:137px;" width="17" height="14" viewBox="0 0 17 14"><path d="M0 0.500H17M8 3.500H17M8 6.500H17M8 9.500H17M0 12.500H17" stroke="#666"/><path d="M0.500 6.500H6.200M3.700 4L6.200 6.500L3.700 9" fill="none" stroke="#2f6fbd" stroke-width="1.400"/></svg>
<div style="left:327px;top:135px;width:1px;height:20px;background:#d4d4d4;"></div>
<svg style="left:335px;top:136px;" width="17" height="17" viewBox="0 0 17 17"><text x="1" y="11" font-family="Liberation Sans, sans-serif" font-size="9" fill="#555" transform="rotate(-40 6 9)">ab</text><path d="M4 15.500L14 5.500M10.500 5.500H14V9" fill="none" stroke="#555" stroke-width="1.100"/></svg>
<svg style="left:354px;top:143px;" width="6" height="4" viewBox="0 0 6 4"><path d="M0.3 0.5H5.7L3 3.5Z" fill="#666"/></svg>
<svg style="left:379px;top:165px;" width="8" height="8" viewBox="0 0 8 8"><path d="M0.5 5V0.5H5M3 3L7.200 7.200M7.500 3.800V7.500H3.800" fill="none" stroke="#666" stroke-width="1"/></svg>
<div style="left:390px;top:89px;width:1px;height:83px;background:#d4d4d4;"></div>
<svg style="left:466px;top:96.5px;" width="6" height="4" viewBox="0 0 6 4"><path d="M0.3 0.5H5.7L3 3.5Z" fill="#666"/></svg>
<svg style="left:401px;top:113px;" width="18" height="17" viewBox="0 0 18 17"><rect x="0.500" y="0.500" width="15" height="8.500" fill="#fff" stroke="#2f6fbd" stroke-width="1.300"/><circle cx="8" cy="4.800" r="2.200" fill="#2f6fbd"/><ellipse cx="12.500" cy="10.500" rx="4.500" ry="1.700" fill="#f0c060"/><ellipse cx="12.500" cy="13" rx="4.500" ry="1.700" fill="#e8b04a"/><ellipse cx="12.500" cy="15.300" rx="4.500" ry="1.500" fill="#f0c060"/></svg>
<svg style="left:423px;top:120px;" width="6" height="4" viewBox="0 0 6 4"><path d="M0.3 0.5H5.7L3 3.5Z" fill="#666"/></svg>
<svg style="left:402px;top:137px;" width="16" height="15" viewBox="0 0 16 15"><text x="8.500" y="6.500" font-family="Liberation Sans, sans-serif" font-size="8" fill="#444">0</text><text x="0" y="14.500" font-family="Liberation Sans, sans-serif" font-size="8" fill="#555">,00</text><path d="M7 3.500H1M3 1.500L1 3.500L3 5.500" fill="none" stroke="#2f6fbd" stroke-width="1.200"/></svg>
<svg style="left:423px;top:137px;" width="16" height="15" viewBox="0 0 16 15"><text x="3.500" y="6.500" font-family="Liberation Sans, sans-serif" font-size="8" fill="#444">,00</text><text x="7.500" y="14.500" font-family="Liberation Sans, sans-serif" font-size="8" fill="#444">,0</text><path d="M0.500 11.500H6.500M4.500 9.500L6.500 11.500L4.500 13.500" fill="none" stroke="#2f6fbd" stroke-width="1.200"/></svg>
<svg style="left:473px;top:165px;" width="8" height="8" viewBox="0 0 8 8"><path d="M0.5 5V0.5H5M3 3L7.200 7.200M7.500 3.800V7.500H3.800" fill="none" stroke="#666" stroke-width="1"/></svg>
<div style="left:484px;top:89px;width:1px;height:83px;background:#d4d4d4;"></div>
<svg style="left:496px;top:90px;" width="17" height="17" viewBox="0 0 17 17"><rect x="0.500" y="0.500" width="13" height="12" fill="#fff" stroke="#777"/><path d="M0.500 4.500H13.500M0.500 8.500H13.500M5 0.500V12.500M9.500 0.500V12.500" stroke="#999"/><rect x="1" y="1" width="4" height="3.500" fill="#d04a2f"/><rect x="1" y="5" width="4" height="3.500" fill="#2f6fbd"/><rect x="1" y="9" width="4" height="3.500" fill="#d04a2f"/><rect x="7.500" y="7.500" width="9" height="9" fill="#fff" stroke="#555"/><path d="M9.500 10.500H14.500M9.500 13.500H14.500M13.500 9L10.500 15" stroke="#333"/></svg>
<svg style="left:496px;top:113px;" width="17" height="17" viewBox="0 0 17 17"><rect x="0.500" y="0.500" width="14" height="11" fill="#fff" stroke="#777"/><path d="M0.500 4H14.500M0.500 7.500H14.500M5 0.500V11.500M10 0.500V11.500" stroke="#999"/><rect x="5.500" y="4.500" width="4" height="3" fill="#9bb7e0"/><path d="M16 4L9 12" stroke="#555" stroke-width="2"/><path d="M9.500 10.500L11.500 12.500C10.500 16 6.500 16.500 4.500 15.500C6.500 14.500 6.500 11.500 9.500 10.500Z" fill="#2f6fbd"/></svg>
<svg style="left:496px;top:136px;" width="17" height="17" viewBox="0 0 17 17"><rect x="0.500" y="0.500" width="14" height="11" fill="#fff" stroke="#777"/><path d="M0.500 4H14.500M0.500 7.500H14.500M5 0.500V11.500M10 0.500V11.500" stroke="#999"/><rect x="5.500" y="4.500" width="4" height="3" fill="#9bb7e0"/><rect x="1" y="4.500" width="4" height="3" fill="#c9d9f0"/><path d="M16 4L9 12" stroke="#555" stroke-width="2"/><path d="M9.500 10.500L11.500 12.500C10.500 16 6.500 16.500 4.500 15.500C6.500 14.500 6.500 11.500 9.500 10.500Z" fill="#2f6fbd"/></svg>
<svg style="left:670px;top:97px;" width="6" height="4" viewBox="0 0 6 4"><path d="M0.3 0.5H5.7L3 3.5Z" fill="#666"/></svg>
<svg style="left:674px;top:120px;" width="6" height="4" viewBox="0 0 6 4"><path d="M0.3 0.5H5.7L3 3.5Z" fill="#666"/></svg>
<svg style="left:586px;top:143px;" width="6" height="4" viewBox="0 0 6 4"><path d="M0.3 0.5H5.7L3 3.5Z" fill="#666"/></svg>
<div style="left:693px;top:89px;width:1px;height:83px;background:#d4d4d4;"></div>
<svg style="left:705px;top:90px;" width="17" height="16" viewBox="0 0 17 16"><path d="M0.500 0.500H7.500V5.500H0.500ZM0.500 10.500H7.500V15.500H0.500ZM0.500 5.500V10.500H4V5.500M4 0.500V5.500M4 10.500V15.500" fill="#fff" stroke="#777"/><rect x="8.500" y="5.500" width="8" height="4" fill="#fff" stroke="#777"/><path d="M12.500 5.500V9.500" stroke="#777"/><path d="M8 7.500H2.500M4.700 5.300L2.500 7.500L4.700 9.700" fill="none" stroke="#2f6fbd" stroke-width="1.400"/></svg>
<svg style="left:705px;top:113px;" width="17" height="16" viewBox="0 0 17 16"><path d="M0.500 0.500H7.500V5.500H0.500ZM0.500 10.500H7.500V15.500H0.500ZM0.500 5.500V10.500H4V5.500M4 0.500V5.500M4 10.500V15.500" fill="#fff" stroke="#777"/><path d="M9.500 4L16 10.500M16 4L9.500 10.500" stroke="#e0453a" stroke-width="1.600"/></svg>
<svg style="left:705px;top:135px;" width="17" height="18" viewBox="0 0 17 18"><path d="M1 2.500H16M1 0.500V4.500M16 0.500V4.500M3 1L1.200 2.500L3 4M14 1L15.800 2.500L14 4" fill="none" stroke="#2f6fbd"/><rect x="0.500" y="6.500" width="15" height="10" fill="#fff" stroke="#777"/><path d="M0.500 9.500H15.500M0.500 13.500H15.500M5.500 6.500V16.500M10.500 6.500V16.500" stroke="#999"/><rect x="5.500" y="9.500" width="5" height="4" fill="#2f6fbd"/></svg>
<svg style="left:782px;top:97px;" width="6" height="4" viewBox="0 0 6 4"><path d="M0.3 0.5H5.7L3 3.5Z" fill="#666"/></svg>
<svg style="left:778px;top:120px;" width="6" height="4" viewBox="0 0 6 4"><path d="M0.3 0.5H5.7L3 3.5Z" fill="#666"/></svg>
<svg style="left:770px;top:143px;" width="6" height="4" viewBox="0 0 6 4"><path d="M0.3 0.5H5.7L3 3.5Z" fill="#666"/></svg>
<div style="left:799px;top:89px;width:1px;height:83px;background:#d4d4d4;"></div>
<svg style="left:816px;top:90px;" width="16" height="16" viewBox="0 0 16 16"><path d="M14.500 3.500V1H1.500L8 7.800L1.500 14.700H14.500V12" fill="none" stroke="#555" stroke-width="1.700"/></svg>
<svg style="left:838px;top:97px;" width="6" height="4" viewBox="0 0 6 4"><path d="M0.3 0.5H5.7L3 3.5Z" fill="#666"/></svg>
<span class="t m" style="left:855.5px;transform:translateX(-50%);top:87.8px;font-size:9.5px;line-height:11.4px;color:#2f6fbd;font-weight:700;">А</span>
<span class="t m" style="left:855.5px;transform:translateX(-50%);top:96.8px;font-size:9.5px;line-height:11.4px;color:#6f8fbd;font-weight:700;">Я</span>
<svg style="left:860px;top:95px;" width="8" height="8" viewBox="0 0 8 8"><path d="M0 0H8L5 3.500V7.500H3V3.500Z" fill="#666"/></svg>
<svg style="left:871px;top:97px;" width="6" height="4" viewBox="0 0 6 4"><path d="M0.3 0.5H5.7L3 3.5Z" fill="#666"/></svg>
<svg style="left:817px;top:113px;" width="15" height="17" viewBox="0 0 15 17"><rect x="0.500" y="0.500" width="14" height="15.500" fill="#fff" stroke="#777"/><rect x="0.500" y="0.500" width="14" height="3" fill="#999"/><path d="M7.500 5.500V13M4.300 10L7.500 13.300L10.700 10" fill="none" stroke="#2f6fbd" stroke-width="1.800"/></svg>
<svg style="left:835px;top:120px;" width="6" height="4" viewBox="0 0 6 4"><path d="M0.3 0.5H5.7L3 3.5Z" fill="#666"/></svg>
<svg style="left:852px;top:113px;" width="14" height="15" viewBox="0 0 14 15"><circle cx="8.500" cy="5.500" r="4.300" fill="#fff" stroke="#2f6fbd" stroke-width="1.800"/><path d="M5.300 8.700L0.800 13.500" stroke="#2f6fbd" stroke-width="2.200"/></svg>
<svg style="left:871px;top:120px;" width="6" height="4" viewBox="0 0 6 4"><path d="M0.3 0.5H5.7L3 3.5Z" fill="#666"/></svg>
<svg style="left:817px;top:137px;" width="15" height="14" viewBox="0 0 15 14"><path d="M9 0.500L14 5L7 12.500L2 8Z" fill="#f08a8a"/><path d="M2 8L7 12.500L5.500 13.500L0.500 9.500Z" fill="#f6c7a0"/></svg>
<svg style="left:835px;top:143px;" width="6" height="4" viewBox="0 0 6 4"><path d="M0.3 0.5H5.7L3 3.5Z" fill="#666"/></svg>
<div style="left:894px;top:89px;width:1px;height:83px;background:#d4d4d4;"></div>
<svg style="left:925px;top:166px;" width="11" height="7" viewBox="0 0 11 7"><path d="M0.500 6L5.500 1L10.500 6" fill="none" stroke="#444" stroke-width="1.100"/></svg>
<svg style="left:112px;top:197px;" width="8" height="5" viewBox="0 0 8 5"><path d="M0.300 0.500H7.700L4 4.500Z" fill="#808080"/></svg>
<div style="left:141px;top:195px;width:2px;height:2px;background:#b0b0b0;"></div>
<div style="left:141px;top:199px;width:2px;height:2px;background:#b0b0b0;"></div>
<div style="left:141px;top:203px;width:2px;height:2px;background:#b0b0b0;"></div>
<svg style="left:170px;top:195px;" width="11" height="11" viewBox="0 0 11 11"><path d="M1 1L10 10M10 1L1 10" stroke="#b4b4b4" stroke-width="1.700"/></svg>
<svg style="left:205px;top:194px;" width="14" height="12" viewBox="0 0 14 12"><path d="M1 7L5 11L13 1" fill="none" stroke="#c0c0c0" stroke-width="2.200"/></svg>
<span class="t m" style="left:245.5px;transform:translateX(-50%);top:191.6px;font-size:14px;line-height:16.8px;color:#555;font-weight:700;font-style:italic;font-family:'Liberation Serif',serif;">f</span>
<span class="t m" style="left:250.2px;transform:translateX(-50%);top:196.2px;font-size:10.5px;line-height:12.6px;color:#555;font-weight:700;font-style:italic;font-family:'Liberation Serif',serif;">x</span>
<svg style="left:927px;top:197px;" width="8" height="6" viewBox="0 0 8 6"><path d="M0.800 0.800L4 4L7.200 0.800" fill="none" stroke="#5a5a5a" stroke-width="1.900"/></svg>
<svg style="left:46px;top:594px;" width="5" height="9" viewBox="0 0 5 9"><path d="M4.500 0.500L0.500 4.500L4.500 8.500Z" fill="#c0c0c0"/></svg>
<svg style="left:76px;top:594px;" width="5" height="9" viewBox="0 0 5 9"><path d="M0.500 0.500L4.500 4.500L0.500 8.500Z" fill="#c0c0c0"/></svg>
<svg style="left:213px;top:590.5px;" width="17" height="17" viewBox="0 0 17 17"><circle cx="8.500" cy="8.500" r="7.500" fill="none" stroke="#777" stroke-width="1.100"/><path d="M8.500 4.500V12.500M4.500 8.500H12.500" stroke="#777" stroke-width="1.300"/></svg>
<svg style="left:28px;top:617px;" width="13" height="13" viewBox="0 0 13 13"><circle cx="3" cy="3" r="2.800" fill="#555"/><path d="M6.500 1.500H12.500V12.500H1.500V7" fill="none" stroke="#555"/><path d="M1.500 7.500H12.500M1.500 10H12.500M5 7.500V12.500M8.500 7.500V12.500" stroke="#555"/></svg>
<svg style="left:643px;top:617px;" width="14" height="14" viewBox="0 0 14 14"><path d="M1 1H13V13H1ZM1 5H13M1 9H13M5 1V13M9 1V13" fill="none" stroke="#7a7a7a" stroke-width="1.500"/></svg>
<svg style="left:683px;top:617px;" width="14" height="14" viewBox="0 0 14 14"><rect x="0.500" y="0.500" width="13" height="12" fill="none" stroke="#666"/><rect x="3.500" y="2.500" width="7" height="8" fill="none" stroke="#666"/><path d="M5 4.500H9M5 6.500H9M5 8.500H9" stroke="#666"/></svg>
<svg style="left:723px;top:617px;" width="14" height="14" viewBox="0 0 14 14"><rect x="0.500" y="0.500" width="13" height="12" fill="none" stroke="#666"/><path d="M4.500 0.500V6.500H0.500M8.500 0.500V6.500H4.500" fill="none" stroke="#666"/></svg>
<div style="left:756px;top:624px;width:8px;height:1px;background:#444;"></div>
<div style="left:769px;top:624px;width:100px;height:1px;background:#a6a6a6;"></div>
<div style="left:817px;top:618px;width:5px;height:12px;background:#666;"></div>
<div style="left:873px;top:624px;width:9px;height:1px;background:#444;"></div>
<div style="left:877px;top:620px;width:1px;height:9px;background:#444;"></div>
<svg style="left:231px;top:757px;" width="16" height="14" viewBox="0 0 16 14"><path d="M0.500 0.500H4.500Q6.500 0.500 6.500 2.500V12.500Q6.500 10.500 4.500 10.500H0.500ZM6.500 2.500Q6.500 0.500 8.500 0.500H12.500V5" fill="none" stroke="#777"/><path d="M6.500 12.500Q6.500 10.500 8.500 10.500" fill="none" stroke="#777"/><path d="M9.500 6.500L14 11.500M14 6.500L9.500 11.500" stroke="#555" stroke-width="1.300"/></svg>
<svg style="left:645px;top:757px;" width="15" height="15" viewBox="0 0 15 15"><path d="M0.500 1.500H6.500V12.500H0.500ZM8.500 1.500H14.500V12.500H8.500Z" fill="#f3f3f3" stroke="#6a6a6a"/><path d="M7.500 0V15" stroke="#6a6a6a"/><path d="M2 3.500H5.500M2 5.500H5.500M2 7.500H5.500M2 9.500H5.500M9.500 3.500H13M9.500 5.500H13M9.500 7.500H13M9.500 9.500H13" stroke="#6a6a6a"/></svg>
<svg style="left:684px;top:758px;" width="15" height="13" viewBox="0 0 15 13"><rect x="0.500" y="0.500" width="14" height="12" fill="none" stroke="#555"/><path d="M2.500 3.500H12.500M2.500 5.500H12.500M2.500 7.500H12.500M2.500 9.500H12.500" stroke="#555"/></svg>
<svg style="left:725px;top:757px;" width="17" height="16" viewBox="0 0 17 16"><path d="M0.500 0.500H12.500V6M0.500 0.500V12.500H7" fill="none" stroke="#666"/><path d="M2.500 3.500H10.500M2.500 5.500H10.500M2.500 7.500H7M2.500 9.500H6" stroke="#666"/><circle cx="12" cy="11" r="4" fill="#f3f3f3" stroke="#555" stroke-width="1.200"/><path d="M9.500 9Q12 10.500 11 13.500M13 7.500Q12 10 15.500 10.500" fill="none" stroke="#555"/></svg>
<div style="left:757px;top:764px;width:8px;height:1px;background:#444;"></div>
<div style="left:771px;top:764px;width:100px;height:1px;background:#a6a6a6;"></div>
<div style="left:820px;top:758px;width:5px;height:12px;background:#666;"></div>
<div style="left:875px;top:764px;width:9px;height:1px;background:#444;"></div>
<div style="left:879px;top:760px;width:1px;height:9px;background:#444;"></div>
<div style="left:153px;top:631px;width:131px;height:88px;background:#ffffff;border-radius:10px;box-shadow:1px 2px 5px 1px rgba(0,0,0,.45);"></div>
<div style="left:154px;top:632px;width:129px;height:86px;background:#ffffff;border:3px solid #ee1c24;border-radius:9px;"></div>
<div style="left:158px;top:636px;width:121px;height:78px;background:#ececec;border-radius:5px;border:1px solid #a8a8a8;"></div>
<svg style="left:198px;top:643px" width="34" height="31" viewBox="0 0 34 31"><rect x="9" y="0" width="24" height="31" rx="1.500" fill="#1f6e43"/><rect x="9" y="0" width="12" height="8" fill="#2a8556"/><rect x="21" y="0" width="12" height="8" fill="#3f9a6a"/><rect x="9" y="8" width="12" height="8" fill="#1c6b41"/><rect x="21" y="8" width="12" height="8" fill="#2a8556"/><rect x="9" y="16" width="12" height="7.500" fill="#1a5c38"/><rect x="21" y="16" width="12" height="7.500" fill="#1c6b41"/><rect x="9" y="23.500" width="24" height="7.500" fill="#1a5c38"/><rect x="0" y="7" width="14" height="18" rx="1" fill="#1f7244"/><text x="7" y="21" text-anchor="middle" font-family="Liberation Sans, sans-serif" font-weight="700" font-size="14" fill="#fff">X</text></svg>
<span class="t m" style="left:170.5px;top:679.3px;font-size:12px;line-height:14.4px;color:#111;letter-spacing:0.08px;">Lumpics.ru - Как</span>
<span class="t m" style="left:160.5px;top:692.8px;font-size:12px;line-height:14.4px;color:#111;letter-spacing:-0.09px;">вставить файл Exce</span>
<div style="left:159px;top:637px;width:119px;height:76px;border-radius:4px;background:repeating-linear-gradient(135deg,rgba(0,0,0,0) 0,rgba(0,0,0,0) 3.140px,rgba(15,15,15,.95) 3.140px,rgba(15,15,15,.95) 4.240px);"></div>
<svg style="left:0;top:0" width="964" height="792" viewBox="0 0 964 792"><defs><filter id="sh" x="-10%" y="-10%" width="130%" height="130%"><feGaussianBlur in="SourceAlpha" stdDeviation="1.8"/><feOffset dx="2.5" dy="2"/><feComponentTransfer><feFuncA type="linear" slope=".6"/></feComponentTransfer><feMerge><feMergeNode/><feMergeNode in="SourceGraphic"/></feMerge></filter></defs><g filter="url(#sh)"><path d="M281.2 685.5 L283.6 684.5 L286.8 683.3 L290.6 681.9 L294.8 680.2 L299.3 678.5 L303.8 676.6 L308.2 674.8 L312.4 672.9 L316.3 671.1 L320.2 669.2 L324.2 667.2 L328.1 665.2 L332.0 663.1 L336.0 661.0 L339.9 658.7 L343.8 656.5 L347.8 654.1 L351.9 651.7 L356.1 649.1 L360.2 646.5 L364.2 643.9 L368.2 641.2 L371.9 638.5 L375.4 635.8 L378.6 633.1 L381.6 630.5 L384.4 627.8 L387.1 625.1 L389.6 622.4 L392.1 619.6 L394.5 616.7 L396.9 613.7 L399.3 610.5 L401.7 607.2 L404.0 603.7 L406.2 600.2 L408.3 596.6 L410.3 593.1 L412.2 589.8 L413.9 586.5 L415.6 583.4 L417.0 580.3 L418.4 577.3 L419.7 574.4 L420.8 571.5 L421.9 568.7 L422.9 565.9 L423.8 563.1 L424.7 560.3 L425.5 557.5 L426.2 554.8 L426.9 552.2 L427.4 549.5 L427.9 546.9 L428.4 544.3 L428.9 541.7 L429.4 539.1 L429.9 536.4 L430.4 533.7 L430.9 531.1 L431.3 528.4 L431.7 525.7 L432.1 523.0 L432.4 520.4 L432.6 517.8 L432.8 515.2 L433.0 512.6 L433.1 510.1 L433.2 507.6 L433.3 505.1 L433.4 502.6 L433.4 500.0 L433.4 497.5 L433.4 494.8 L433.4 492.1 L433.3 489.4 L433.3 486.8 L433.2 484.3 L433.1 481.9 L433.0 479.8 L432.9 477.8 L432.7 475.9 L432.5 474.2 L432.3 472.7 L432.1 471.2 L431.9 469.9 L431.7 468.7 L431.6 467.6 L431.5 466.5 L431.4 465.4 L431.3 464.4 L431.2 463.4 L431.1 462.6 L431.1 461.9 L431.0 461.2 L431.0 460.7 L423.4 461.3 L423.5 461.8 L423.5 462.4 L423.6 463.2 L423.6 464.1 L423.7 465.0 L423.8 466.1 L423.9 467.2 L424.0 468.4 L424.2 469.7 L424.4 471.0 L424.5 472.3 L424.7 473.7 L424.9 475.2 L425.1 476.7 L425.3 478.4 L425.4 480.2 L425.5 482.3 L425.6 484.6 L425.7 487.0 L425.8 489.6 L425.8 492.2 L425.8 494.8 L425.8 497.4 L425.8 500.0 L425.8 502.4 L425.7 504.9 L425.6 507.3 L425.5 509.8 L425.4 512.2 L425.3 514.7 L425.1 517.1 L424.8 519.6 L424.5 522.1 L424.2 524.6 L423.8 527.2 L423.4 529.8 L422.9 532.4 L422.5 535.0 L422.0 537.7 L421.5 540.3 L421.0 542.9 L420.5 545.5 L420.0 548.0 L419.5 550.6 L419.0 553.1 L418.4 555.7 L417.7 558.3 L417.0 560.9 L416.1 563.6 L415.2 566.3 L414.2 569.1 L413.2 571.8 L412.1 574.7 L410.9 577.5 L409.5 580.5 L408.1 583.5 L406.4 586.7 L404.6 590.0 L402.7 593.4 L400.8 596.9 L398.7 600.3 L396.5 603.7 L394.3 607.0 L392.1 610.1 L389.9 613.0 L387.6 615.8 L385.3 618.6 L382.9 621.2 L380.5 623.8 L377.8 626.4 L375.0 629.0 L372.0 631.6 L368.7 634.2 L365.1 636.9 L361.3 639.6 L357.4 642.2 L353.4 644.9 L349.3 647.4 L345.3 649.9 L341.4 652.3 L337.5 654.7 L333.7 656.9 L329.8 659.1 L326.0 661.2 L322.1 663.3 L318.3 665.3 L314.4 667.2 L310.6 669.1 L306.6 671.0 L302.2 672.9 L297.8 674.8 L293.3 676.6 L289.1 678.3 L285.4 679.8 L282.2 681.1 L279.8 682.1 Z" fill="#fff" stroke="#fff" stroke-width="3" stroke-linejoin="round"/><path d="M419.8 476.4 L427.0 459.2 L438.3 473.6" fill="none" stroke="#fff" stroke-width="9.4" stroke-linecap="round" stroke-linejoin="miter"/><path d="M281.2 685.5 L283.6 684.5 L286.8 683.3 L290.6 681.9 L294.8 680.2 L299.3 678.5 L303.8 676.6 L308.2 674.8 L312.4 672.9 L316.3 671.1 L320.2 669.2 L324.2 667.2 L328.1 665.2 L332.0 663.1 L336.0 661.0 L339.9 658.7 L343.8 656.5 L347.8 654.1 L351.9 651.7 L356.1 649.1 L360.2 646.5 L364.2 643.9 L368.2 641.2 L371.9 638.5 L375.4 635.8 L378.6 633.1 L381.6 630.5 L384.4 627.8 L387.1 625.1 L389.6 622.4 L392.1 619.6 L394.5 616.7 L396.9 613.7 L399.3 610.5 L401.7 607.2 L404.0 603.7 L406.2 600.2 L408.3 596.6 L410.3 593.1 L412.2 589.8 L413.9 586.5 L415.6 583.4 L417.0 580.3 L418.4 577.3 L419.7 574.4 L420.8 571.5 L421.9 568.7 L422.9 565.9 L423.8 563.1 L424.7 560.3 L425.5 557.5 L426.2 554.8 L426.9 552.2 L427.4 549.5 L427.9 546.9 L428.4 544.3 L428.9 541.7 L429.4 539.1 L429.9 536.4 L430.4 533.7 L430.9 531.1 L431.3 528.4 L431.7 525.7 L432.1 523.0 L432.4 520.4 L432.6 517.8 L432.8 515.2 L433.0 512.6 L433.1 510.1 L433.2 507.6 L433.3 505.1 L433.4 502.6 L433.4 500.0 L433.4 497.5 L433.4 494.8 L433.4 492.1 L433.3 489.4 L433.3 486.8 L433.2 484.3 L433.1 481.9 L433.0 479.8 L432.9 477.8 L432.7 475.9 L432.5 474.2 L432.3 472.7 L432.1 471.2 L431.9 469.9 L431.7 468.7 L431.6 467.6 L431.5 466.5 L431.4 465.4 L431.3 464.4 L431.2 463.4 L431.1 462.6 L431.1 461.9 L431.0 461.2 L431.0 460.7 L423.4 461.3 L423.5 461.8 L423.5 462.4 L423.6 463.2 L423.6 464.1 L423.7 465.0 L423.8 466.1 L423.9 467.2 L424.0 468.4 L424.2 469.7 L424.4 471.0 L424.5 472.3 L424.7 473.7 L424.9 475.2 L425.1 476.7 L425.3 478.4 L425.4 480.2 L425.5 482.3 L425.6 484.6 L425.7 487.0 L425.8 489.6 L425.8 492.2 L425.8 494.8 L425.8 497.4 L425.8 500.0 L425.8 502.4 L425.7 504.9 L425.6 507.3 L425.5 509.8 L425.4 512.2 L425.3 514.7 L425.1 517.1 L424.8 519.6 L424.5 522.1 L424.2 524.6 L423.8 527.2 L423.4 529.8 L422.9 532.4 L422.5 535.0 L422.0 537.7 L421.5 540.3 L421.0 542.9 L420.5 545.5 L420.0 548.0 L419.5 550.6 L419.0 553.1 L418.4 555.7 L417.7 558.3 L417.0 560.9 L416.1 563.6 L415.2 566.3 L414.2 569.1 L413.2 571.8 L412.1 574.7 L410.9 577.5 L409.5 580.5 L408.1 583.5 L406.4 586.7 L404.6 590.0 L402.7 593.4 L400.8 596.9 L398.7 600.3 L396.5 603.7 L394.3 607.0 L392.1 610.1 L389.9 613.0 L387.6 615.8 L385.3 618.6 L382.9 621.2 L380.5 623.8 L377.8 626.4 L375.0 629.0 L372.0 631.6 L368.7 634.2 L365.1 636.9 L361.3 639.6 L357.4 642.2 L353.4 644.9 L349.3 647.4 L345.3 649.9 L341.4 652.3 L337.5 654.7 L333.7 656.9 L329.8 659.1 L326.0 661.2 L322.1 663.3 L318.3 665.3 L314.4 667.2 L310.6 669.1 L306.6 671.0 L302.2 672.9 L297.8 674.8 L293.3 676.6 L289.1 678.3 L285.4 679.8 L282.2 681.1 L279.8 682.1 Z" fill="#d8434b"/><path d="M419.8 476.4 L427.0 459.2 L438.3 473.6" fill="none" stroke="#d8434b" stroke-width="6.4" stroke-linecap="round" stroke-linejoin="miter"/></g></svg>
</div>
</body>
</html>
